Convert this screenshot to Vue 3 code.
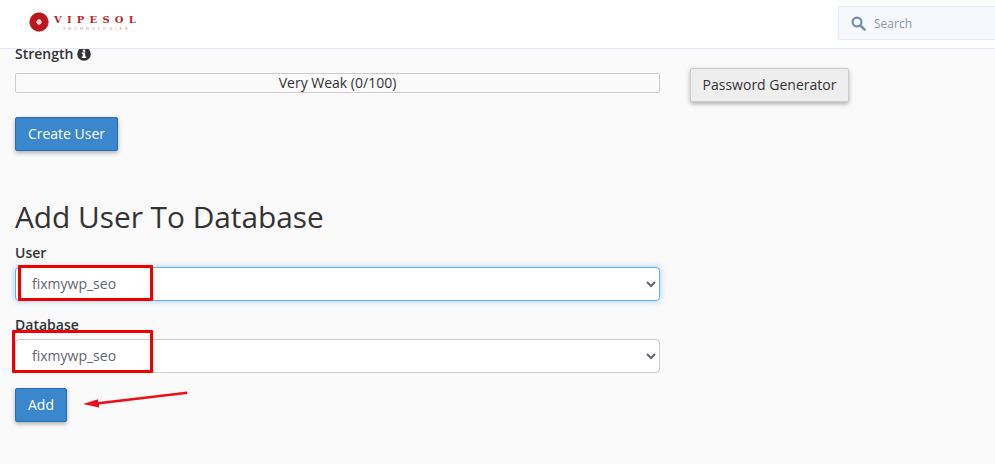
<script setup>
const fields = [
  { id: 'user', label: 'User', value: 'fixmywp_seo', focused: true },
  { id: 'database', label: 'Database', value: 'fixmywp_seo', focused: false },
]
</script>

<template>
  <div class="page">
    <header class="topbar">
      <div class="logo">
        <svg class="logo-mark" width="20" height="20" viewBox="0 0 20 20">
          <circle cx="10" cy="10" r="6" fill="none" stroke="#b8171c" stroke-width="7" />
          <circle cx="10" cy="10" r="9.2" fill="none" stroke="#c9383b" stroke-width="1" stroke-dasharray="1.2 1" />
          <circle cx="10" cy="10" r="2.4" fill="#f3d5d5" />
        </svg>
        <div class="logo-text">
          <span class="logo-name">VIPESOL</span>
          <span class="logo-sub">TECHNOLOGIES</span>
        </div>
      </div>
      <div class="search">
        <svg width="15" height="15" viewBox="0 0 15 15">
          <circle cx="6" cy="6" r="4.4" fill="none" stroke="#7c8fa9" stroke-width="2.2" />
          <path d="M9.5 9.5 L13.6 13.6" stroke="#7c8fa9" stroke-width="2.6" stroke-linecap="round" />
        </svg>
        <span>Search</span>
      </div>
    </header>

    <main class="content">
      <div class="strength-label">
        Strength
        <svg width="14" height="14" viewBox="0 0 14 14">
          <circle cx="7" cy="7" r="6.8" fill="#333" />
          <path d="M4.8 5.6 H8.2 V9.6 H9.2 V11 H4.8 V9.6 H5.8 V7 H4.8 Z" fill="#fff" />
          <rect x="5.8" y="2.6" width="2.4" height="2.2" fill="#fff" />
        </svg>
      </div>
      <div class="strength-row">
        <div class="meter">Very Weak (0/100)</div>
        <button type="button" class="btn generator">Password Generator</button>
      </div>
      <button type="button" class="btn primary create">Create User</button>

      <h2 class="title">Add User To Database</h2>
      <div v-for="field in fields" :key="field.id" class="field">
        <label class="field-label" :for="field.id">{{ field.label }}</label>
        <select :id="field.id" class="select" :class="{ focused: field.focused }">
          <option>{{ field.value }}</option>
        </select>
      </div>
      <button type="button" class="btn primary add">Add</button>
    </main>

    <!-- red annotations drawn on top of the screenshot -->
    <div class="mark mark-user"></div>
    <div class="mark mark-database"></div>
    <svg class="arrow" width="110" height="20" viewBox="0 0 110 20">
      <path d="M105 1.6 L105.4 4 L17 14.6 L17 17.6 L1 14 L16 9.2 L16 12 Z" fill="#ee0f1b" />
    </svg>
  </div>
</template>

<style scoped>
.page {
  position: relative;
  width: 995px;
  height: 464px;
  overflow: hidden;
  background: #fafafa;
  font-family: "Open Sans", sans-serif;
  font-size: 14px;
  color: #333;
}

.topbar {
  position: relative;
  z-index: 1;
  display: flex;
  align-items: flex-start;
  justify-content: space-between;
  height: 49px;
  padding: 6px 0 0 29px;
  box-sizing: border-box;
  background: #fff;
  border-bottom: 1px solid #e3e8f5;
}

.logo {
  display: flex;
  align-items: flex-start;
  gap: 5px;
  margin-top: 6px;
}

.logo-text {
  display: flex;
  flex-direction: column;
  align-items: flex-start;
  margin-top: 2px;
}

.logo-name {
  font-family: "DejaVu Serif", serif;
  font-size: 10px;
  font-weight: 700;
  line-height: 11px;
  letter-spacing: 5.2px;
  color: #b8262b;
}

.logo-sub {
  margin: 1px 0 0 9px;
  font-family: "Liberation Sans", sans-serif;
  font-size: 4px;
  line-height: 5px;
  letter-spacing: 3px;
  color: #d78b8d;
}

.search {
  display: flex;
  align-items: center;
  gap: 8px;
  width: 157px;
  height: 34px;
  padding-left: 12px;
  box-sizing: border-box;
  border: 1px solid #e3e8f5;
  border-right: 0;
  border-radius: 4px 0 0 4px;
  background: #f7f8fd;
  font-size: 12px;
  color: #8f99a8;
}

.content {
  display: flex;
  flex-direction: column;
  align-items: flex-start;
  padding-left: 15px;
  margin-top: -5px;
}

.strength-label {
  display: flex;
  align-items: center;
  gap: 4px;
  height: 20px;
  font-weight: 600;
  line-height: 20px;
}

.strength-row {
  display: flex;
  align-items: flex-start;
  gap: 30px;
  margin-top: 4px;
}

.meter {
  width: 645px;
  height: 20px;
  margin-top: 5px;
  box-sizing: border-box;
  border: 1px solid #ccc;
  border-radius: 2px;
  background: #fafafa;
  text-align: center;
  line-height: 18px;
}

.btn {
  box-sizing: border-box;
  padding: 0 0 2px;
  border-radius: 2px;
  font: inherit;
  box-shadow: 0 2px 4px rgba(0, 0, 0, 0.3);
  cursor: pointer;
}

.generator {
  width: 159px;
  height: 34px;
  border: 1px solid #ccc;
  background: #eee;
  color: #333;
}

.primary {
  height: 34px;
  border: 1px solid #2a6fad;
  background: #3a87cd;
  color: #fff;
}

.create {
  width: 103px;
  margin-top: 15px;
}

.title {
  margin: 48px 0 0;
  font-size: 29.8px;
  font-weight: 400;
  line-height: 36px;
  color: #333;
}

.field {
  display: flex;
  flex-direction: column;
  align-items: flex-start;
}

.field-label {
  margin-top: 8px;
  line-height: 20px;
  font-weight: 600;
}

.field + .field .field-label {
  margin-top: 14px;
}

.select {
  width: 645px;
  height: 34px;
  margin-top: 4px;
  padding: 0 12px 2px;
  box-sizing: border-box;
  border: 1px solid #ccc;
  border-radius: 4px;
  background: #fff;
  font: inherit;
  font-variant-ligatures: none;
  color: #5f6670;
}

.focused {
  border-color: #66afe9;
  box-shadow: 0 0 6px rgba(102, 175, 233, 0.6);
}

.add {
  width: 52px;
  margin-top: 15px;
}

.mark {
  position: absolute;
  z-index: 2;
  box-sizing: border-box;
  border: 3px solid #ee0000;
  border-radius: 1px;
}

.mark-user {
  left: 18px;
  top: 265px;
  width: 135px;
  height: 36px;
}

.mark-database {
  left: 12px;
  top: 330px;
  width: 141px;
  height: 43px;
}

.arrow {
  position: absolute;
  z-index: 2;
  left: 82px;
  top: 390px;
}
</style>
